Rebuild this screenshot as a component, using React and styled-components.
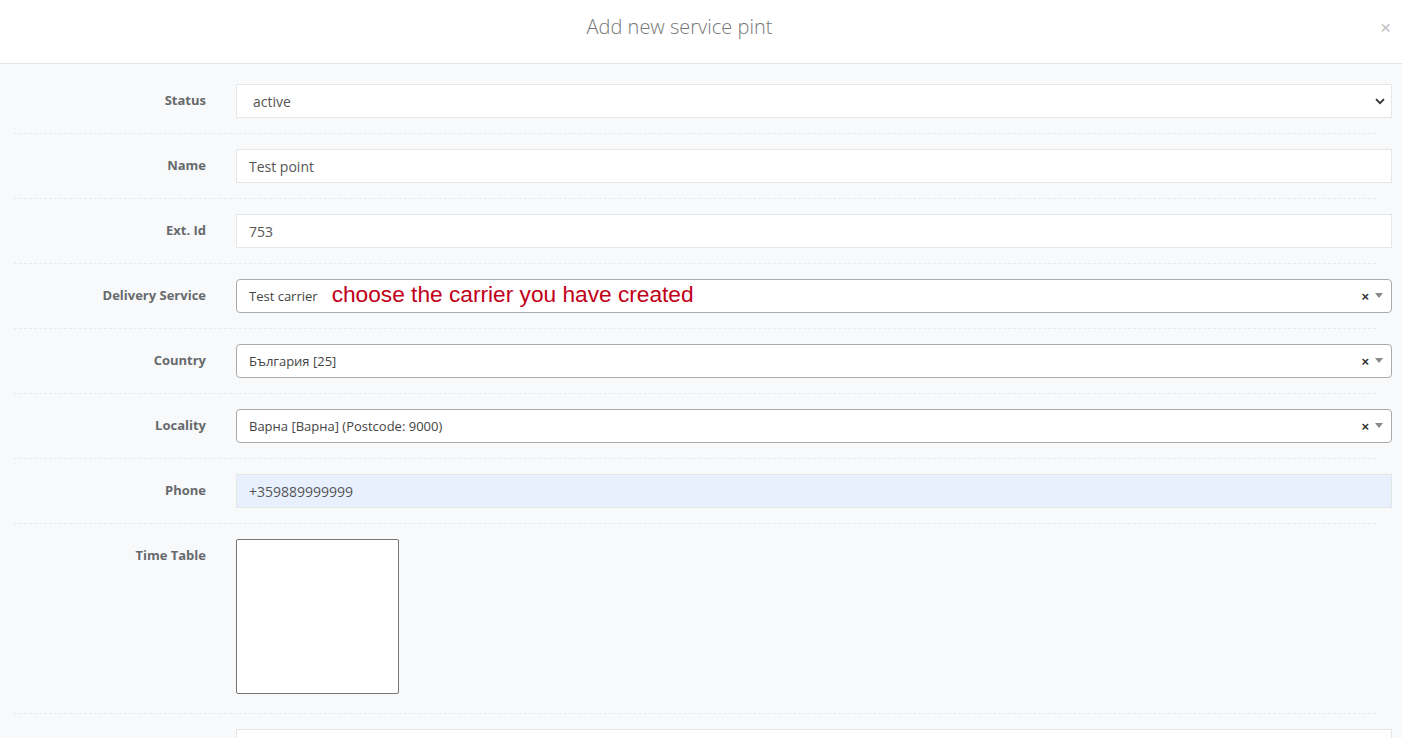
import styled, { createGlobalStyle } from "styled-components"

const Global = createGlobalStyle`
  html, body {
    margin: 0;
    padding: 0;
    background: #f8f9fb;
    font-family: "Open Sans", "Noto Sans", sans-serif;
    overflow: hidden;
  }
`
const Modal = styled.div`
  width: 1402px;
  height: 738px;
  background: #f8f9fb;
`
const Header = styled.div`
  height: 63px;
  background: #fff;
  border-bottom: 1px solid #e5e5e5;
  display: flex;
  align-items: center;
  justify-content: center;
  position: relative;
`
const Title = styled.h4`
  margin: 0;
  font-size: 20px;
  font-weight: 300;
  color: #777;
  padding: 0 43px 10px 0;
`
const Close = styled.span`
  position: absolute;
  right: 11px;
  top: 18px;
  font-size: 19px;
  color: #c2c2c2;
  font-family: "Liberation Sans", sans-serif;
  line-height: 1;
`
const Body = styled.div`
  padding-top: 5px;
`
const Row = styled.div`
  display: grid;
  grid-template-columns: 206px 1fr;
  column-gap: 30px;
  padding: 15px 10px 15px 0;
  align-items: start;
`
const Label = styled.label`
  text-align: right;
  font-size: 13px;
  font-weight: 700;
  color: #676a6c;
  padding-top: 7px;
  line-height: 18px;
`
const Divider = styled.div`
  margin: 0 26px 0 14px;
  border-top: 1px dashed #e7eaec;
`
const Input = styled.div`
  height: 34px;
  box-sizing: border-box;
  border: 1px solid #e5e6e7;
  background: ${(p) => (p.$filled ? "#e8f0fe" : "#fff")};
  padding: 0 12px;
  display: flex;
  align-items: center;
  font-size: 14px;
  color: #555;
`
const NativeSelect = styled(Input)`
  justify-content: space-between;
  padding: 0 6px 0 16px;
  border-radius: 1px;
`
const Select2 = styled.div`
  height: 34px;
  box-sizing: border-box;
  border: 1px solid #aaa;
  border-radius: 4px;
  background: #fff;
  display: flex;
  align-items: center;
  padding: 0 8px 0 12px;
  font-size: 13px;
  color: #444;
`
const SelText = styled.span`
  flex: 1;
  display: flex;
  align-items: center;
`
const Note = styled.span`
  font-family: "Liberation Sans", Arial, sans-serif;
  font-size: 22.7px;
  color: #c00018;
  margin-left: 14px;
  margin-top: -3px;
`
const Clear = styled.span`
  font-size: 13px;
  font-weight: 700;
  color: #333;
  margin-right: 6px;
  font-family: "Liberation Sans", sans-serif;
`
const Arrow = styled.span`
  width: 0;
  height: 0;
  border-left: 4px solid transparent;
  border-right: 4px solid transparent;
  border-top: 5px solid #888;
  margin-top: -2px;
`
const TextArea = styled.div`
  width: 163px;
  height: 155px;
  box-sizing: border-box;
  border: 1px solid #767676;
  border-radius: 2px;
  background: #fff;
  margin-bottom: 4px;
`

const Chevron = () => (
  <svg width="10" height="7" viewBox="0 0 10 7">
    <path d="M1 1.2l4 4 4-4" fill="none" stroke="#333" strokeWidth="1.8" />
  </svg>
)

const SelectBox = ({ children }) => (
  <Select2>
    <SelText>{children}</SelText>
    <Clear>×</Clear>
    <Arrow />
  </Select2>
)

export default function App() {
  return (
    <Modal>
      <Global />
      <Header>
        <Title>Add new service pint</Title>
        <Close>×</Close>
      </Header>
      <Body>
        <Row>
          <Label>Status</Label>
          <NativeSelect>
            <span>active</span>
            <Chevron />
          </NativeSelect>
        </Row>
        <Divider />
        <Row>
          <Label>Name</Label>
          <Input>Test point</Input>
        </Row>
        <Divider />
        <Row>
          <Label>Ext. Id</Label>
          <Input>753</Input>
        </Row>
        <Divider />
        <Row>
          <Label>Delivery Service</Label>
          <SelectBox>
            Test carrier<Note>choose the carrier you have created</Note>
          </SelectBox>
        </Row>
        <Divider />
        <Row>
          <Label>Country</Label>
          <SelectBox>България [25]</SelectBox>
        </Row>
        <Divider />
        <Row>
          <Label>Locality</Label>
          <SelectBox>Варна [Варна] (Postcode: 9000)</SelectBox>
        </Row>
        <Divider />
        <Row>
          <Label>Phone</Label>
          <Input $filled>+359889999999</Input>
        </Row>
        <Divider />
        <Row>
          <Label>Time Table</Label>
          <div>
            <TextArea />
          </div>
        </Row>
        <Divider />
        <Row>
          <Label></Label>
          <Input />
        </Row>
      </Body>
    </Modal>
  )
}
